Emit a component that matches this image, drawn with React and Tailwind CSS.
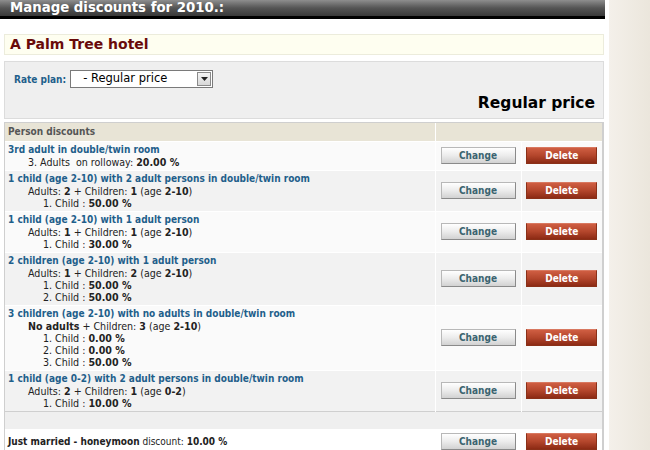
import React from "react";

const rows = [
  {
    title: "3rd adult in double/twin room",
    lines: [
      <div className="pl-[20px]">3. Adults&nbsp; on rolloway: <b>20.00 %</b></div>,
    ],
  },
  {
    title: "1 child (age 2-10) with 2 adult persons in double/twin room",
    lines: [
      <div className="pl-[20px]">Adults: <b>2</b> + Children: <b>1</b> (age <b>2-10</b>)</div>,
      <div className="pl-[35px]">1. Child : <b>50.00 %</b></div>,
    ],
  },
  {
    title: "1 child (age 2-10) with 1 adult person",
    lines: [
      <div className="pl-[20px]">Adults: <b>1</b> + Children: <b>1</b> (age <b>2-10</b>)</div>,
      <div className="pl-[35px]">1. Child : <b>30.00 %</b></div>,
    ],
  },
  {
    title: "2 children (age 2-10) with 1 adult person",
    lines: [
      <div className="pl-[20px]">Adults: <b>1</b> + Children: <b>2</b> (age <b>2-10</b>)</div>,
      <div className="pl-[35px]">1. Child : <b>50.00 %</b></div>,
      <div className="pl-[35px]">2. Child : <b>50.00 %</b></div>,
    ],
  },
  {
    title: "3 children (age 2-10) with no adults in double/twin room",
    lines: [
      <div className="pl-[20px]"><b>No adults</b> + Children: <b>3</b> (age <b>2-10</b>)</div>,
      <div className="pl-[35px]">1. Child : <b>0.00 %</b></div>,
      <div className="pl-[35px]">2. Child : <b>0.00 %</b></div>,
      <div className="pl-[35px]">3. Child : <b>50.00 %</b></div>,
    ],
  },
  {
    title: "1 child (age 0-2) with 2 adult persons in double/twin room",
    lines: [
      <div className="pl-[20px]">Adults: <b>2</b> + Children: <b>1</b> (age <b>0-2</b>)</div>,
      <div className="pl-[35px]">1. Child : <b>10.00 %</b></div>,
    ],
  },
];

function ChangeBtn() {
  return (
    <div className="mx-auto w-[75px] h-[17px] border border-[#b8b8b8] border-b-[#8a8a8a] border-r-[#8a8a8a] bg-gradient-to-b from-[#ffffff] via-[#ececec] to-[#d2d2d2] text-[#3b6470] font-bold text-[10px] leading-[15px] text-center">
      Change
    </div>
  );
}

function DeleteBtn() {
  return (
    <div className="mx-auto w-[71px] h-[17px] border border-[#8a3018] border-t-[#d87860] bg-gradient-to-b from-[#cf5e42] via-[#b4462c] to-[#8c2a14] text-white font-bold text-[10px] leading-[15px] text-center">
      Delete
    </div>
  );
}

export default function App() {
  return (
    <div
      className="flex w-[650px] h-[450px] overflow-hidden bg-white text-[10px] text-[#222]"
      style={{ fontFamily: '"DejaVu Sans Condensed", "DejaVu Sans", Verdana, sans-serif' }}
    >
      <div className="w-[605px] shrink-0">
        <div
          className="h-[19px] bg-gradient-to-b from-[#8e8e8e] via-[#555] to-[#383838] border-b-[3px] border-black pl-[10px] text-white font-bold text-[13.3px] leading-[16px]"
          style={{ fontFamily: '"DejaVu Sans", Verdana, sans-serif' }}
        >
          Manage discounts for 2010.:
        </div>
        <div
          className="mt-[15px] ml-[4px] mr-[1px] h-[21px] bg-[#fefef0] border border-[#ececdc] pl-[5px] text-[#6a0a0a] font-bold text-[14px] leading-[19px]"
          style={{ fontFamily: '"DejaVu Sans", Verdana, sans-serif' }}
        >
          A Palm Tree hotel
        </div>
        <div className="mt-[6px] ml-[4px] mr-[1px] h-[58px] bg-[#efefef] border border-[#dcdcdc]">
          <div className="flex items-center pt-[8px] pl-[9px]">
            <span className="text-[#1f5f8b] font-bold text-[10px]">Rate plan:</span>
            <div className="ml-[4px] w-[143px] h-[18px] border border-[#7a7a7a] bg-white flex items-center justify-between">
              <span
                className="pl-[12px] text-[11.5px] text-black"
                style={{ fontFamily: '"DejaVu Sans", Verdana, sans-serif' }}
              >
                - Regular price
              </span>
              <div className="w-[14px] h-[14px] mr-[1px] border border-[#8a8a8a] bg-gradient-to-b from-[#f4f4f4] to-[#d8d8d8] flex items-center justify-center">
                <svg width="7" height="4" viewBox="0 0 7 4"><path d="M0 0h7L3.5 4z" fill="#222" /></svg>
              </div>
            </div>
          </div>
          <div
            className="text-right pr-[8px] mt-[5px] text-black font-bold text-[15.5px] leading-[20px]"
            style={{ fontFamily: '"DejaVu Sans", Verdana, sans-serif' }}
          >
            Regular price
          </div>
        </div>
        <div className="mt-[3px] ml-[4px] mr-[1px] border border-[#cfcfcf] border-r-2">
          <table className="w-full border-collapse">
            <tbody>
              <tr className="bg-[#e8e4d6] h-[18px]">
                <td className="text-left pl-[3px] font-bold text-[#555] border-r border-white">Person discounts</td>
                <td colSpan={2}></td>
              </tr>
              {rows.map((r, i) => (
                <tr key={i} className={(i % 2 === 0 ? "bg-[#fafafa]" : "bg-[#f2f2f2]") + " border-t border-white"}>
                  <td className="pl-[3px] py-[2px] align-top leading-[12px] border-r border-white">
                    <div className="font-bold text-[#1f5f8b]">{r.title}</div>
                    <div className="text-[10.6px]">
                      {r.lines.map((l, j) => (
                        <React.Fragment key={j}>{l}</React.Fragment>
                      ))}
                    </div>
                  </td>
                  <td className="w-[86px] border-r border-white align-middle">
                    <ChangeBtn />
                  </td>
                  <td className="w-[81px] align-middle">
                    <DeleteBtn />
                  </td>
                </tr>
              ))}
              <tr className="bg-[#efefef] h-[18px] border-t border-[#cfcfcf]">
                <td colSpan={3}></td>
              </tr>
              <tr className="bg-white h-[24px]">
                <td className="pl-[3px] align-middle">
                  <b>Just married - honeymoon</b> discount: <b>10.00 %</b>
                </td>
                <td className="w-[86px] align-middle"><ChangeBtn /></td>
                <td className="w-[81px] align-middle"><DeleteBtn /></td>
              </tr>
            </tbody>
          </table>
        </div>
      </div>
      <div className="ml-[4px] flex-1 bg-gradient-to-r from-[#f4f0ea] to-[#ebe6dc]" />
    </div>
  );
}
